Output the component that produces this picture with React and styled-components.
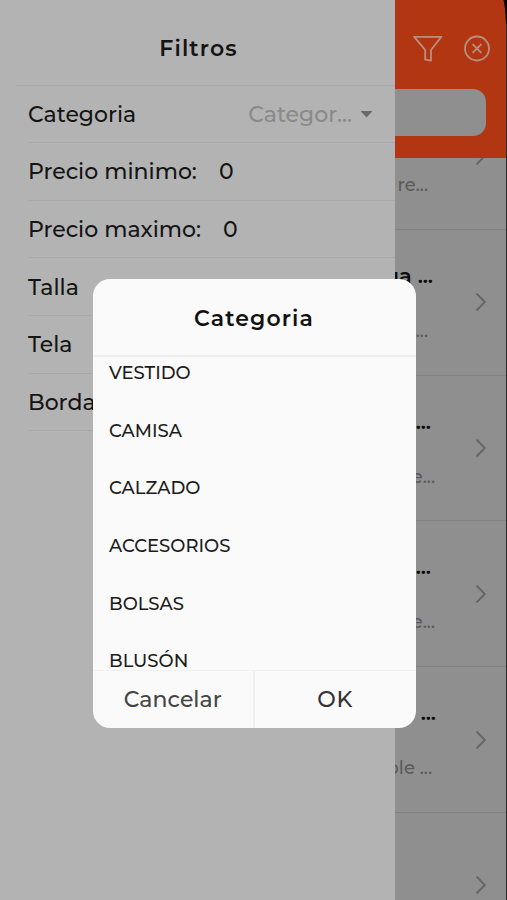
import styled, { createGlobalStyle } from 'styled-components'

const GlobalStyle = createGlobalStyle`
    * {
        box-sizing: border-box;
    }
    body {
        margin: 0;
        background-color: #b3b3b3;
        font-family: "Montserrat", "Inter", "Liberation Sans", sans-serif;
        font-weight: 500;
    }
`
const Container = styled.div`
    position: relative;
    width: 507px;
    height: 900px;
    display: flex;
    overflow: hidden;
`

/* drawer */
const Drawer = styled.div`
    width: 395px;
    height: 900px;
    flex-shrink: 0;
    background-color: #b3b3b3;
    color: #141414;
    overflow: hidden;
`
const DrawerHeader = styled.div`
    height: 85.5px;
    margin-left: 16px;
    padding: 14px 14px 0 0;
    border-bottom: 1.5px solid #aaa;
    display: flex;
    align-items: center;
    justify-content: center;
`
const DrawerTitle = styled.div`
    font-size: 22px;
    font-weight: 600;
    letter-spacing: 1.1px;
    line-height: 28px;
`
const Fields = styled.div`
    margin-left: 28px;
`
const Field = styled.div`
    height: 57.65px;
    padding-top: 2px;
    border-bottom: 1px solid #a9a9a9;
    display: flex;
    align-items: center;
    font-size: 22px;
    line-height: 28px;
    white-space: nowrap;
`
const Value = styled.div`
    margin-left: 22px;
`
const Select = styled.div`
    margin-left: auto;
    margin-right: 22px;
    display: flex;
    align-items: center;
    gap: 8px;
    color: #8a8a8a;
`

/* page behind the drawer */
const Page = styled.div`
    width: 112px;
    height: 900px;
    background-color: #8f8f8f;
    border-right: 1.5px solid #2a2a2a;
    display: flex;
    flex-direction: column;
    overflow: hidden;
`
const PageHeader = styled.div`
    height: 158px;
    flex-shrink: 0;
    background-color: #b33613;
`
const Actions = styled.div`
    height: 89px;
    padding: 35px 0 0 18px;
    display: flex;
    align-items: flex-start;
    gap: 21px;
`
const SearchBox = styled.div`
    width: 91px;
    height: 47px;
    border-radius: 0 13px 13px 0;
    background-color: #8f8f8f;
`
const List = styled.div`
    flex: 1;
    overflow: hidden;
`
const ListInner = styled.div`
    margin-top: -74px;
`
const Product = styled.div`
    height: 145.8px;
    border-bottom: 1.5px solid #818181;
    display: flex;
    align-items: center;
    justify-content: space-between;
    padding-right: 19px;
`
const ProductText = styled.div`
    width: 60px;
    height: 100%;
    padding-top: 33px;
    display: flex;
    flex-direction: column;
    gap: 29px;
`
const Line = styled.div`
    height: 26px;
    display: flex;
    justify-content: flex-end;
    overflow: hidden;
    white-space: pre;
    line-height: 26px;
`
const ProductName = styled(Line)`
    width: ${(props) => props.$end}px;
    font-size: 21px;
    font-weight: 600;
    color: #0d0d0d;
`
const ProductInfo = styled(Line)`
    width: ${(props) => props.$end}px;
    font-size: 18px;
    color: #5b5b5b;
`
const Corner = styled.svg`
    position: absolute;
    top: 0;
    right: 0;
`

/* dialog */
const Dialog = styled.div`
    position: absolute;
    top: 279px;
    left: 92.5px;
    width: 323px;
    height: 449px;
    border-radius: 17px;
    background-color: #fafafa;
    display: flex;
    flex-direction: column;
    overflow: hidden;
`
const DialogTitle = styled.div`
    height: 78px;
    flex-shrink: 0;
    padding-top: 2px;
    border-bottom: 2px solid #efefef;
    display: flex;
    align-items: center;
    justify-content: center;
    color: #111;
    font-size: 22px;
    font-weight: 600;
    letter-spacing: 1.1px;
`
const Options = styled.div`
    flex: 1;
    overflow: hidden;
`
const OptionsInner = styled.div`
    margin-top: -12.5px;
`
const Option = styled.div`
    height: 57.6px;
    padding-left: 16.5px;
    display: flex;
    align-items: center;
    font-size: 18px;
    color: #1c1c1c;
`
const Buttons = styled.div`
    height: 58px;
    flex-shrink: 0;
    border-top: 1px solid #f1f1f1;
    display: flex;
`
const Button = styled.div`
    flex: 1;
    display: flex;
    align-items: center;
    justify-content: center;
    font-size: 22px;
    color: #444;
    & + & {
        border-left: 2px solid #efefef;
        letter-spacing: 0.8px;
        color: #333;
    }
`

const Chevron = () => (
    <svg width="12" height="20" viewBox="0 0 12 20" fill="none" stroke="#666" strokeWidth="1.9">
        <path d="M1.5 1.5 L9.8 10 L1.5 18.5" />
    </svg>
)

const Caret = () => (
    <svg width="13" height="8" viewBox="0 0 13 8">
        <path d="M0.5 0 H12.5 L6.5 6.5 Z" fill="#6a6a6a" />
    </svg>
)

const products = [
    { id: 0, name: '', nameEnd: 37, info: 're...', infoEnd: 33 },
    { id: 1, name: 'ua ...', nameEnd: 38, info: '...', infoEnd: 33 },
    { id: 2, name: '...', nameEnd: 36, info: 'e...', infoEnd: 40 },
    { id: 3, name: '...', nameEnd: 36, info: 'e...', infoEnd: 40 },
    { id: 4, name: '...', nameEnd: 41, info: 'ble ...', infoEnd: 37 },
    { id: 5, name: '', nameEnd: 37, info: '', infoEnd: 37 },
]

const options = ['VESTIDO', 'CAMISA', 'CALZADO', 'ACCESORIOS', 'BOLSAS', 'BLUSÓN']

const App = () => {
    return (
        <>
            <GlobalStyle />
            <Container>
                <Drawer>
                    <DrawerHeader>
                        <DrawerTitle>Filtros</DrawerTitle>
                    </DrawerHeader>
                    <Fields>
                        <Field>
                            <div>Categoria</div>
                            <Select>
                                Categor...
                                <Caret />
                            </Select>
                        </Field>
                        <Field>
                            <div>Precio minimo:</div>
                            <Value>0</Value>
                        </Field>
                        <Field>
                            <div>Precio maximo:</div>
                            <Value>0</Value>
                        </Field>
                        <Field>Talla</Field>
                        <Field>Tela</Field>
                        <Field>Bordado</Field>
                    </Fields>
                </Drawer>
                <Page>
                    <PageHeader>
                        <Actions>
                            <svg width="30" height="28" viewBox="0 0 30 28" fill="none" stroke="#b99080" strokeWidth="1.8" strokeLinejoin="round">
                                <path d="M1.2 1.8 H28.4 L18 15 V25.7 L12.2 24.7 V15 Z" />
                            </svg>
                            <svg width="28" height="28" viewBox="0 0 28 28" fill="none" stroke="#b99080" strokeWidth="1.8">
                                <circle cx="13" cy="13.5" r="12" />
                                <path d="M8.6 9.1 L17.4 17.9 M17.4 9.1 L8.6 17.9" />
                            </svg>
                        </Actions>
                        <SearchBox />
                    </PageHeader>
                    <List>
                        <ListInner>
                            {products.map((item) => (
                                <Product key={item.id}>
                                    <ProductText>
                                        <ProductName $end={item.nameEnd}>{item.name}</ProductName>
                                        <ProductInfo $end={item.infoEnd}>{item.info}</ProductInfo>
                                    </ProductText>
                                    <Chevron />
                                </Product>
                            ))}
                        </ListInner>
                    </List>
                </Page>
                <Corner width="5" height="24" viewBox="0 0 5 24">
                    <path d="M1.5 0 C2.6 5 3.6 11 4 24 H5 V0 Z" fill="#000" />
                </Corner>
                <Dialog>
                    <DialogTitle>Categoria</DialogTitle>
                    <Options>
                        <OptionsInner>
                            {options.map((option) => (
                                <Option key={option}>{option}</Option>
                            ))}
                        </OptionsInner>
                    </Options>
                    <Buttons>
                        <Button>Cancelar</Button>
                        <Button>OK</Button>
                    </Buttons>
                </Dialog>
            </Container>
        </>
    )
}

export default App
